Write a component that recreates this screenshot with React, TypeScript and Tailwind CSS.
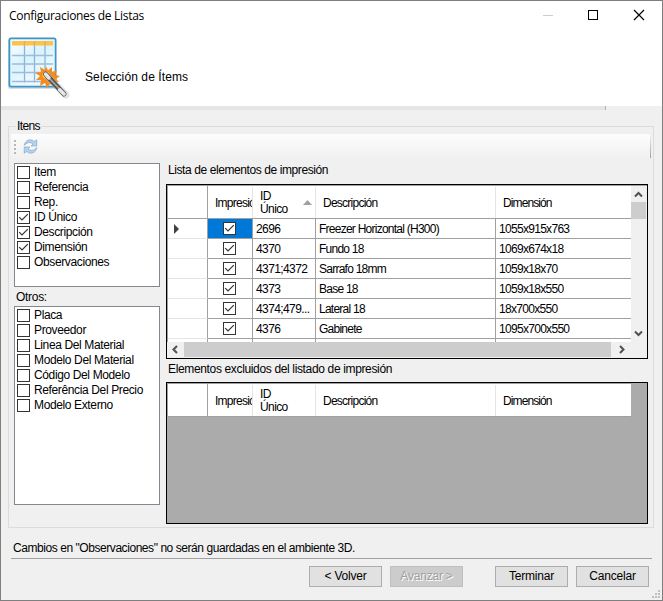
import { clsx } from "clsx"

interface CheckItem {
  label: string
  checked?: boolean
}

interface PartRow {
  id: string
  description: string
  dimension: string
}

const mainFields: CheckItem[] = [
  { label: "Item" },
  { label: "Referencia" },
  { label: "Rep." },
  { label: "ID Único", checked: true },
  { label: "Descripción", checked: true },
  { label: "Dimensión", checked: true },
  { label: "Observaciones" },
]

const otherFields: CheckItem[] = [
  { label: "Placa" },
  { label: "Proveedor" },
  { label: "Linea Del Material" },
  { label: "Modelo Del Material" },
  { label: "Código Del Modelo" },
  { label: "Referência Del Precio" },
  { label: "Modelo Externo" },
]

const parts: PartRow[] = [
  { id: "2696", description: "Freezer Horizontal (H300)", dimension: "1055x915x763" },
  { id: "4370", description: "Fundo 18", dimension: "1069x674x18" },
  { id: "4371;4372", description: "Sarrafo 18mm", dimension: "1059x18x70" },
  { id: "4373", description: "Base 18", dimension: "1059x18x550" },
  { id: "4374;479...", description: "Lateral 18", dimension: "18x700x550" },
  { id: "4376", description: "Gabinete", dimension: "1095x700x550" },
]

const columns = "grid grid-cols-[40px_45px_63px_180px_135px]"

function CheckBox({ checked }: { checked?: boolean }) {
  return (
    <svg width="13" height="13" viewBox="0 0 13 13" className="block shrink-0">
      <rect x="0.5" y="0.5" width="12" height="12" fill="#fff" stroke="#333" />
      {checked && <path d="M2.2 6.2 5 9 10.8 3.2" fill="none" stroke="#333" strokeWidth="1.2" />}
    </svg>
  )
}

function CheckList({ items, className }: { items: CheckItem[]; className: string }) {
  return (
    <div className={clsx("w-[146px] border border-[#828790] bg-white pt-0.5 pl-0.5", className)}>
      {items.map((item) => (
        <div key={item.label} className="flex h-[15px] items-start gap-1">
          <CheckBox checked={item.checked} />
          <span className="leading-[13px] tracking-[-0.37px]">{item.label}</span>
        </div>
      ))}
    </div>
  )
}

function GridHeader({ sorted }: { sorted?: boolean }) {
  return (
    <div className={clsx(columns, "h-[33px] w-[463px] items-stretch border-b border-[#a0a0a0] bg-white tracking-[-0.75px]")}>
      <div className="border-r border-[#a0a0a0]" />
      <div className="mt-px flex items-center overflow-hidden border-r border-[#e5e5e5] pl-[7px]">
        <span className="tracking-[-0.75px]">Impresión</span>
      </div>
      <div className="mt-px flex items-center justify-between border-r border-[#e5e5e5] pr-[3px] pl-[7px]">
        <span className="leading-[13px] tracking-[-0.6px]">
          ID
          <br />
          Único
        </span>
        {sorted && (
          <svg width="9" height="5" viewBox="0 0 9 5">
            <path d="M0 5 4.5 0 9 5Z" fill="#a0a0a0" />
          </svg>
        )}
      </div>
      <div className="mt-px flex items-center border-r border-[#e5e5e5] pl-[7px]">Descripción</div>
      <div className="mt-px flex items-center pl-[7px] tracking-[-0.9px]">Dimensión</div>
    </div>
  )
}

function GridRow({ row, current }: { row: PartRow; current: boolean }) {
  return (
    <div className={clsx(columns, "h-5")}>
      <div className="flex items-center border-r border-b border-r-[#a0a0a0] border-b-[#e5e5e5] pl-1.5">
        {current && (
          <svg width="5" height="10" viewBox="0 0 5 10">
            <path d="M0 0 5 5 0 10Z" fill="#404040" />
          </svg>
        )}
      </div>
      <div className={clsx("flex items-center border-r border-b border-[#a0a0a0] pl-[15px]", current && "bg-[#0078d7]")}>
        <CheckBox checked />
      </div>
      <div className="flex items-center border-r border-b border-[#a0a0a0] pl-[3px] tracking-[-0.6px]">{row.id}</div>
      <div className="flex items-center border-r border-b border-[#a0a0a0] pl-[3px] tracking-[-0.75px]">{row.description}</div>
      <div className="flex items-center border-b border-[#a0a0a0] pl-[3px] tracking-[-0.7px]">{row.dimension}</div>
    </div>
  )
}

function Arrow({ d }: { d: string }) {
  return (
    <svg width="9" height="9" viewBox="0 0 9 9">
      <path d={d} fill="none" stroke="#505050" strokeWidth="2" />
    </svg>
  )
}

function VerticalScroll() {
  return (
    <div className="flex h-[156px] w-4 flex-col justify-between bg-[#f0f0f0]">
      <div>
        <div className="flex h-4 w-[15px] items-center justify-center">
          <Arrow d="M1 6.5 4.5 3 8 6.5" />
        </div>
        <div className="h-[17px] w-[15px] bg-[#cdcdcd]" />
      </div>
      <div className="flex h-[17px] w-[15px] items-center justify-center">
        <Arrow d="M1 2.5 4.5 6 8 2.5" />
      </div>
    </div>
  )
}

function HorizontalScroll() {
  return (
    <div className="flex h-4 bg-[#f0f0f0]">
      <div className="flex h-[15px] w-[17px] items-center justify-center">
        <Arrow d="M6 1 2.5 4.5 6 8" />
      </div>
      <div className="h-[15px] w-[427px] bg-[#cdcdcd]" />
      <div className="flex h-[15px] w-5 items-center justify-center">
        <Arrow d="M3 1 6.5 4.5 3 8" />
      </div>
    </div>
  )
}

function TableWizardIcon() {
  return (
    <svg width="64" height="66" viewBox="0 0 64 66" className="shrink-0">
      <defs>
        <linearGradient id="sheet" x1="0" y1="0" x2="0.6" y2="1">
          <stop offset="0" stopColor="#fff" />
          <stop offset="0.5" stopColor="#d9f3fd" />
          <stop offset="1" stopColor="#f5fbff" />
        </linearGradient>
      </defs>
      <rect x="1" y="4" width="48" height="50" rx="2" fill="#bbb" opacity="0.5" />
      <rect x="2.5" y="3.5" width="46" height="48" rx="1.5" fill="url(#sheet)" stroke="#3d96c5" strokeWidth="2" />
      <rect x="4" y="5" width="43" height="45" fill="none" stroke="#e5f7fe" />
      <rect x="5" y="6" width="41" height="4.5" fill="#fcc24c" />
      <path d="M17.5 10.5v37M27.5 10.5v37M38 10.5v37" stroke="#87b6d9" strokeWidth="1.3" />
      <path d="M17.5 6v4.5M27.5 6v4.5M38 6v4.5" stroke="#d9b25e" strokeWidth="1.3" />
      <path d="M5 20.5h41M5 29h41M5 37.5h41M5 46.5h41" stroke="#9dbbdc" strokeWidth="1.5" />
      <path
        d="m39 31 2 4.500 4-3.500v5l5-2-2 5 5 1-4 3 3 3-5 0 1 5-5-3-3 4-2-5-5 3 1-6-5 0 4-4-5-3 6-1-1-5 5 3Z"
        fill="#f68b1f"
      />
      <circle cx="39" cy="40" r="3.5" fill="#ffd24a" />
      <path d="m41 42 18 18" stroke="#bbb" strokeWidth="7" strokeLinecap="round" opacity="0.4" />
      <path d="m38.5 39 18.500 20" stroke="#555" strokeWidth="5" strokeLinecap="round" />
      <path d="m38.5 39 3.500 4M52.500 54.500l4.500 4.500" stroke="#e8e8e8" strokeWidth="3.5" strokeLinecap="round" />
      <path d="m43 44 9 9.500" stroke="#a5a5a5" strokeWidth="1.8" />
    </svg>
  )
}

function RefreshIcon() {
  return (
    <svg width="15" height="15" viewBox="0 0 15 15">
      <g fill="#b3d3f0" stroke="#7c9fc4" strokeWidth="0.6" strokeLinejoin="round">
        <path d="M1.2 6.5C2 1 7.5-.8 11.3 2.5L13.8.8V7H8l2-2C7.5 2.8 4 3.2 1.2 6.5Z" />
        <path d="M13.8 8.5C13 14 7.5 15.8 3.7 12.5L1.2 14.2V8H7l-2 2c2.5 2.2 6 1.8 8.8-1.5Z" />
      </g>
    </svg>
  )
}

function WindowButton({ label, disabled }: { label: string; disabled?: boolean }) {
  return (
    <button
      type="button"
      disabled={disabled}
      className={clsx(
        "flex h-[21px] w-[73px] items-center justify-center border pb-0.5 tracking-[-0.2px]",
        disabled
          ? "border-[#bfbfbf] bg-[#cccccc] text-[#a0a0a0] [text-shadow:1px_1px_0_#fff]"
          : "border-[#adadad] bg-[#e1e1e1]"
      )}
    >
      {label}
    </button>
  )
}

export default function App() {
  return (
    <div className="flex h-[601px] w-[663px] flex-col overflow-hidden border border-[#7f7f7f] bg-[#f0f0f0] font-['Liberation_Sans',Arial,sans-serif] text-[12px] leading-[14px] whitespace-nowrap text-black">
      {/* Title bar and banner */}
      <div className="h-[105px] shrink-0 bg-white">
        <div className="flex h-[30px] items-start justify-between pr-[17px] pl-2">
          <span className="mt-1.5 font-['Open_Sans',sans-serif] text-[12px] leading-[17px] tracking-[-0.3px]">
            Configuraciones de Listas
          </span>
          <svg width="102" height="12" viewBox="0 0 102 12" className="mt-2">
            <path d="M0 6.5h10" stroke="#ccc" />
            <rect x="45.5" y="1.5" width="9" height="9" fill="none" stroke="#000" />
            <path d="m91 1 10 10M101 1 91 11" stroke="#000" strokeWidth="1.2" />
          </svg>
        </div>
        <div className="flex gap-[14px] pt-1 pl-1.5">
          <TableWizardIcon />
          <span className="mt-[35px] text-[12px] tracking-[0.1px]">Selección de Ítems</span>
        </div>
      </div>
      <div className="h-1 w-[605px] shrink-0 border-r border-[#b0b0b0] bg-[#e5e5e5]" />

      {/* Items group */}
      <fieldset className="mt-[9px] ml-[7px] h-[409px] w-[646px] shrink-0 border border-[#dcdcdc] pt-px pl-[5px]">
        <legend className="ml-0.5 h-[14px] px-px tracking-[-0.6px]">Itens</legend>
        <div className="-ml-[3px] flex h-[25px] w-[640px] items-center gap-[7px] rounded-r-sm bg-linear-to-b from-[#fdfdfd] to-[#f0f0f0] pl-[3px]">
          <svg width="2" height="14" viewBox="0 0 2 14">
            <path d="M1 0v14" stroke="#b8b8b8" strokeWidth="2" strokeDasharray="2" />
          </svg>
          <RefreshIcon />
          <div className="ml-auto h-[22px] w-px bg-linear-to-b from-[#eee] to-[#a0a0a0]" />
        </div>
        <div className="flex gap-1.5">
          <div className="pt-1">
            <CheckList items={mainFields} className="h-[124px]" />
            <div className="h-[19px] pt-[3px] pl-0.5 tracking-[-0.3px]">Otros:</div>
            <CheckList items={otherFields} className="h-[199px]" />
          </div>
          <div>
            <div className="h-[25px] pt-1 pl-0.5 tracking-[-0.41px]">Lista de elementos de impresión</div>
            <div className="h-[175px] w-[482px] border border-black bg-white">
              <div className="flex h-[157px] border-t border-l border-[#a0a0a0]">
                <div className="h-[156px] w-[463px] overflow-hidden">
                  <GridHeader sorted />
                  {parts.map((row, i) => (
                    <GridRow key={row.id} row={row} current={i === 0} />
                  ))}
                  <div className={clsx(columns, "h-1")}>
                    <div className="border-r border-[#a0a0a0]" />
                    <div className="border-r border-[#a0a0a0]" />
                    <div className="border-r border-[#a0a0a0]" />
                    <div className="border-r border-[#a0a0a0]" />
                  </div>
                </div>
                <VerticalScroll />
              </div>
              <HorizontalScroll />
            </div>
            <div className="h-[23px] pt-[3px] pl-0.5 tracking-[-0.35px]">Elementos excluidos del listado de impresión</div>
            <div className="h-[142px] w-[482px] border border-black bg-[#ababab]">
              <div className="w-[464px] border-t border-l border-[#a0a0a0]">
                <GridHeader />
              </div>
            </div>
          </div>
        </div>
      </fieldset>

      {/* Footer */}
      <div className="mt-3 ml-2.5 h-[19px] w-[641px] shrink-0 border-b border-[#a0a0a0] pt-px pl-0.5 tracking-[-0.44px]">
        Cambios en "Observaciones" no serán guardadas en el ambiente 3D.
      </div>
      <div className="mt-[7px] ml-[308px] flex shrink-0 gap-2">
        <WindowButton label="< Volver" />
        <WindowButton label="Avanzar >" disabled />
        <div className="ml-6 flex gap-2">
          <WindowButton label="Terminar" />
          <WindowButton label="Cancelar" />
        </div>
      </div>
      <svg width="8" height="8" viewBox="0 0 8 8" className="mt-[3px] ml-[651px] shrink-0">
        <path d="M6 0h2v2h-2zM3 3h2v2h-2zM6 3h2v2h-2zM0 6h2v2h-2zM3 6h2v2h-2zM6 6h2v2h-2z" fill="#bfbfbf" />
      </svg>
    </div>
  )
}
